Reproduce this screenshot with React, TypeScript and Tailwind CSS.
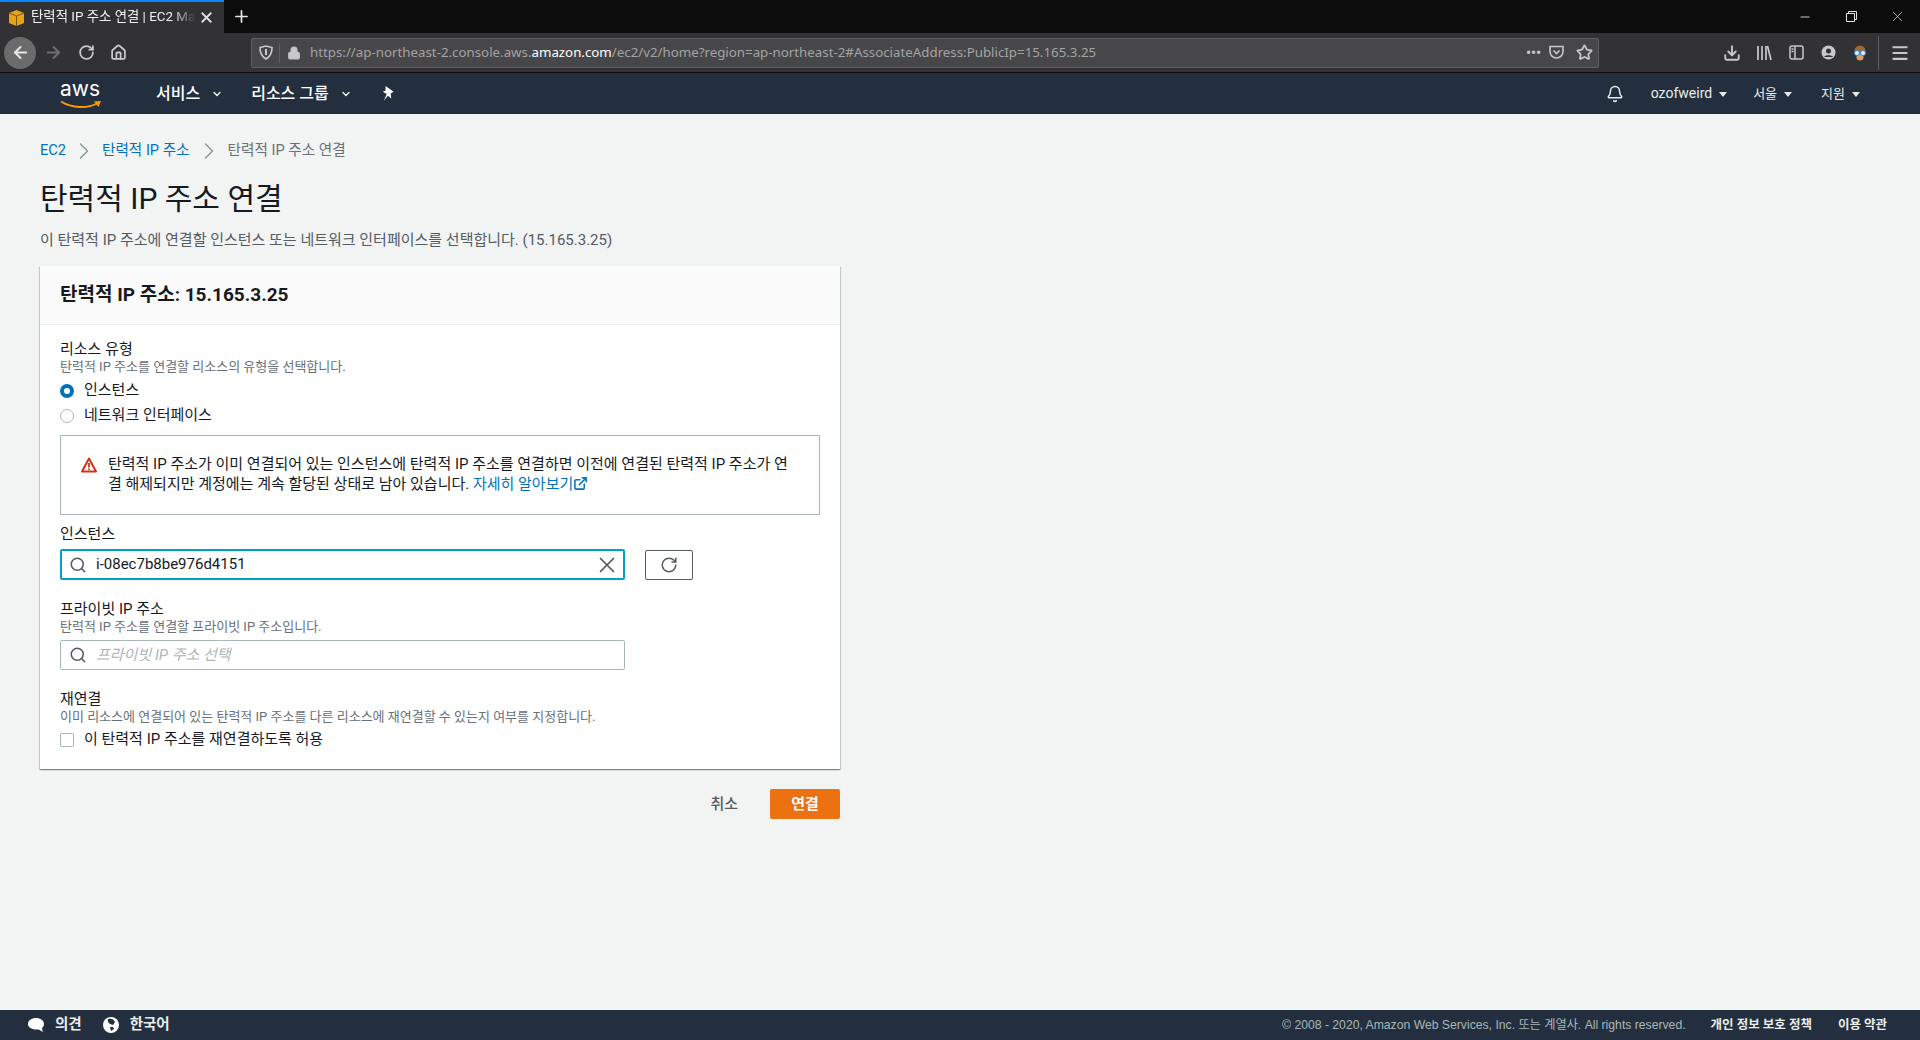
import React from 'react';
import { ArrowLeft, ArrowRight, RotateCw, Home, Lock, Star, Download, Menu, Bell, Search, X, Plus, ChevronDown, ChevronRight, ExternalLink, Minus } from 'lucide-react';

const font = { fontFamily: 'Roboto, "Noto Sans CJK KR", sans-serif' };

function Caret() {
  return (
    <svg width="8" height="5" viewBox="0 0 8 5" className="ml-[7px] mt-px">
      <path d="M0 0h8L4 5z" fill="#e8e8e8" />
    </svg>
  );
}

function TabStrip() {
  return (
    <div className="flex h-[33px] bg-[#0c0c0d] text-white">
      <div className="flex h-[33px] w-[224px] items-center border-t-2 border-[#0a84ff] bg-[#323234] pl-[9px] pr-[9px]">
        <svg width="15" height="16" viewBox="0 0 15 16" className="shrink-0">
          <path d="M7.5 0 15 3v10l-7.5 3L0 13V3z" fill="#e8a317" />
          <path d="M0 3l7.5 3L15 3M7.500 6v10" stroke="#7a5208" strokeWidth="1" fill="none" />
        </svg>
        <span className="ml-[7px] w-[165px] overflow-hidden whitespace-nowrap text-[13.4px] text-[#f0f0f0] [mask-image:linear-gradient(to_right,black_85%,transparent)]">탄력적 IP 주소 연결 | EC2 Man</span>
        <X size={17} strokeWidth={2.500} className="ml-auto text-[#e0e0e0]" />
      </div>
      <div className="flex w-[34px] items-center justify-center">
        <Plus size={19} strokeWidth={2.200} className="text-[#e6e6e6]" />
      </div>
      <div className="ml-auto flex items-center text-[#e6e6e6]">
        <div className="flex w-[46px] justify-center"><Minus size={14} strokeWidth={1.500} /></div>
        <div className="flex w-[46px] justify-center">
          <svg width="11" height="11" viewBox="0 0 11 11" fill="none" stroke="currentColor">
            <path d="M.5 2.5h8v8h-8zM2.5 2.5v-2h8v8h-2" />
          </svg>
        </div>
        <div className="flex w-[46px] justify-center"><X size={17} strokeWidth={1} /></div>
      </div>
    </div>
  );
}

function Toolbar() {
  return (
    <div className="flex h-[40px] items-center border-b border-[#0c0c0d] bg-[#323234] text-[#c8c8c9]">
      <div className="ml-[4px] flex h-[32px] w-[32px] items-center justify-center rounded-full bg-[#6b6b6c]">
        <ArrowLeft size={19} strokeWidth={2.500} className="text-[#e8e8e8]" />
      </div>
      <ArrowRight size={19} strokeWidth={2.500} className="ml-[8px] text-[#6f6f70]" />
      <RotateCw size={17} strokeWidth={2.500} className="ml-[15px]" />
      <Home size={17} strokeWidth={2.500} className="ml-[15px]" />
      <div className="ml-[124px] flex h-[30px] w-[1348px] items-center rounded-[2px] border border-[#5f5f60] bg-[#474749]">
        <svg width="14" height="15" viewBox="0 0 14 15" fill="none" stroke="#c8c8c9" strokeWidth="1.6" className="ml-[7px]">
          <path d="M1 2.5 7 1l6 1.5c0 5-1.5 9-6 11.5C2.500 11.500 1 7.500 1 2.500z" />
          <path d="M7 4v6" strokeWidth="2" />
        </svg>
        <div className="ml-[6px] h-[20px] w-px bg-[#5f5f60]" />
        <Lock size={14} fill="#c8c8c9" className="ml-[7px]" />
        <span className="ml-[9px] whitespace-nowrap text-[13.3px] text-[#a3a3a4]" style={{ fontFamily: '"Noto Sans", sans-serif' }}>
          https://ap-northeast-2.console.aws.<span className="text-white">amazon.com</span>/ec2/v2/home?region=ap-northeast-2#AssociateAddress:PublicIp=15.165.3.25
        </span>
        <span className="ml-auto text-[14px] font-bold leading-none text-[#c8c8c9]">•••</span>
        <svg width="15" height="15" viewBox="0 0 15 15" fill="none" stroke="#c8c8c9" strokeWidth="1.6" className="ml-[8px]">
          <path d="M1 1.500h13v5a6.500 6.500 0 0 1-13 0z" />
          <path d="M4.500 5.500 7.500 8.500l3-3" />
        </svg>
        <Star size={17} strokeWidth={2.500} className="ml-[12px] mr-[5px]" />
      </div>
      <Download size={18} strokeWidth={2.500} className="ml-[124px]" />
      <svg width="16" height="15" viewBox="0 0 16 15" fill="none" stroke="#c8c8c9" className="ml-[15px]">
        <path d="M2 1v14M6 1v14M10 1v14M11.500 1l3.500 14" strokeWidth="1.700" />
      </svg>
      <svg width="15" height="15" viewBox="0 0 15 15" fill="none" stroke="#c8c8c9" strokeWidth="1.500" className="ml-[17px]">
        <rect x="1" y="1" width="13" height="13" rx="2" />
        <path d="M6 1v13M2.500 4h2M2.500 6.500h2" />
      </svg>
      <svg width="15" height="15" viewBox="0 0 15 15" className="ml-[17px]">
        <circle cx="7.500" cy="7.500" r="7" fill="#c8c8c9" />
        <circle cx="7.500" cy="6" r="2.500" fill="#323234" />
        <path d="M3 12c1-2.500 8-2.500 9 0z" fill="#323234" />
      </svg>
      <svg width="14" height="16" viewBox="0 0 14 16" className="ml-[17px]">
        <circle cx="7" cy="6" r="5.500" fill="#a5652a" />
        <circle cx="7" cy="12" r="3.500" fill="#d99a73" />
        <circle cx="4" cy="8" r="2.500" fill="#dff1ff" stroke="#2f86e6" />
        <circle cx="10" cy="8" r="2.500" fill="#dff1ff" stroke="#2f86e6" />
      </svg>
      <div className="ml-[11px] h-[34px] w-px bg-[#5f5f60]" />
      <Menu size={20} strokeWidth={2.500} className="ml-[11px]" />
    </div>
  );
}

function AwsNav() {
  return (
    <div className="flex h-[41px] items-center bg-[#232f3e] text-[#eaeded]">
      <div className="relative ml-[60px] h-[34px] w-[42px]">
        <span className="absolute left-0 top-[-1px] text-[21px] leading-[26px] text-white" style={{ fontFamily: 'Inter, sans-serif' }}>aws</span>
        <svg width="42" height="10" viewBox="0 0 42 10" className="absolute left-0 top-[23px]">
          <path d="M1 1.500c11 7 27 7 36 2" stroke="#f90" strokeWidth="2" fill="none" />
          <path d="M34 1.500l7-.5-2.500 6z" fill="#f90" />
        </svg>
      </div>
      <span className="ml-[54px] text-[16px] font-medium text-white">서비스</span>
      <ChevronDown size={12} strokeWidth={3} className="ml-[11px] mt-px" />
      <span className="ml-[28px] text-[16px] font-medium text-white">리소스 그룹</span>
      <ChevronDown size={12} strokeWidth={3} className="ml-[11px] mt-px" />
      <svg width="16" height="16" viewBox="0 0 14 14" className="ml-[29px]">
        <path d="M4 0l7 5-2.500 1.500L9 11 6 8.500 2.500 13 5 7 1.500 5 4 4z" fill="#fff" />
      </svg>
      <Bell size={18} className="ml-auto -translate-x-px" />
      <span className="ml-[26px] text-[14px]">ozofweird</span>
      <Caret />
      <span className="ml-[26px] text-[13px]">서울</span>
      <Caret />
      <span className="ml-[29px] text-[13px]">지원</span>
      <Caret />
      <div className="w-[60px]" />
    </div>
  );
}

function Radio({ checked, label }: { checked?: boolean; label: string }) {
  return (
    <div className="flex h-[25px] items-center">
      {checked ? (
        <span className="h-[14px] w-[14px] rounded-full border-[4px] border-[#0073bb] bg-white" />
      ) : (
        <span className="h-[14px] w-[14px] rounded-full border border-[#aab7b8] bg-white" />
      )}
      <span className="ml-[10px] text-[15px] text-[#16191f]">{label}</span>
    </div>
  );
}

function Field({ title, sub }: { title: string; sub?: string }) {
  return (
    <>
      <div className="h-[18px] text-[15px] leading-[18px] text-[#16191f]">{title}</div>
      {sub && <div className="mt-px h-[16px] text-[13px] leading-[16px] text-[#687078]">{sub}</div>}
    </>
  );
}

export default function App() {
  return (
    <div className="flex h-[1040px] flex-col overflow-hidden bg-[#f2f3f3]" style={font}>
      <TabStrip />
      <Toolbar />
      <AwsNav />

      <main className="flex-1 px-[40px]">
        <nav className="mt-[27px] flex h-[20px] items-center text-[14.6px]">
          <span className="text-[#0073bb]">EC2</span>
          <ChevronRight size={28} strokeWidth={1.200} className="mx-[4px] text-[#879596]" />
          <span className="text-[#0073bb]">탄력적 IP 주소</span>
          <ChevronRight size={28} strokeWidth={1.200} className="mx-[5px] text-[#879596]" />
          <span className="text-[#687078]">탄력적 IP 주소 연결</span>
        </nav>
        <h1 className="mt-[20px] text-[30px] leading-[36px] text-[#16191f]">탄력적 IP 주소 연결</h1>
        <p className="mt-[13px] text-[15px] leading-[20px] text-[#545b64]">이 탄력적 IP 주소에 연결할 인스턴스 또는 네트워크 인터페이스를 선택합니다. (15.165.3.25)</p>

        <section className="mt-[16px] w-[800px] bg-white shadow-[0_1px_1px_0_rgba(0,28,36,0.3),1px_1px_1px_0_rgba(0,28,36,0.15),-1px_1px_1px_0_rgba(0,28,36,0.15)]">
          <header className="flex h-[59px] items-center border-b border-[#eaeded] bg-[#fafafa] px-[20px]">
            <h2 className="text-[19px] font-bold text-[#16191f]">탄력적 IP 주소: 15.165.3.25</h2>
          </header>
          <div className="px-[20px] pb-[17px] pt-[15px]">
            <Field title="리소스 유형" sub="탄력적 IP 주소를 연결할 리소스의 유형을 선택합니다." />
            <div className="mt-[3px]">
              <Radio checked label="인스턴스" />
              <Radio label="네트워크 인터페이스" />
            </div>

            <div className="mt-[7px] flex h-[80px] w-[760px] border border-[#aab7b8] bg-white pl-[20px] pr-[22px] pt-[18px]">
              <svg width="16" height="16" viewBox="0 0 16 16" className="mt-[3px] shrink-0" fill="none">
                <path d="M8 1.500 15 14.500H1z" stroke="#d13212" strokeWidth="2" strokeLinejoin="round" />
                <path d="M8 6v4.500M8 11.500v1.500" stroke="#d13212" strokeWidth="1.800" />
              </svg>
              <p className="ml-[11px] break-all text-[15px] leading-[20px] text-[#16191f]">
                탄력적 IP 주소가 이미 연결되어 있는 인스턴스에 탄력적 IP 주소를 연결하면 이전에 연결된 탄력적 IP 주소가 연결 해제되지만 계정에는 계속 할당된 상태로 남아 있습니다.{' '}
                <span className="text-[#0073bb]">자세히 알아보기</span>
                <ExternalLink size={15} strokeWidth={2.500} className="inline-block align-[-2px] text-[#0073bb]" />
              </p>
            </div>

            <div className="mt-[10px]"><Field title="인스턴스" /></div>
            <div className="mt-[6px] flex items-center">
              <div className="flex h-[31px] w-[565px] items-center rounded-[2px] border-2 border-[#00a1c9] bg-white pl-[7px] pr-[3px]">
                <Search size={18} strokeWidth={2} className="text-[#545b64]" />
                <span className="ml-[9px] text-[15px] text-[#16191f]">i-08ec7b8be976d4151</span>
                <X size={26} strokeWidth={1.600} className="ml-auto text-[#545b64]" />
              </div>
              <button className="ml-[20px] flex h-[30px] w-[48px] items-center justify-center rounded-[2px] border border-[#545b64] bg-white">
                <RotateCw size={18} strokeWidth={2} className="text-[#545b64]" />
              </button>
            </div>

            <div className="mt-[20px]"><Field title="프라이빗 IP 주소" sub="탄력적 IP 주소를 연결할 프라이빗 IP 주소입니다." /></div>
            <div className="mt-[5px] flex h-[30px] w-[565px] items-center rounded-[2px] border border-[#aab7b8] bg-white pl-[8px]">
              <Search size={18} strokeWidth={2} className="text-[#545b64]" />
              <span className="ml-[9px] text-[15px] italic text-[#aab7b8]">프라이빗 IP 주소 선택</span>
            </div>

            <div className="mt-[20px]"><Field title="재연결" sub="이미 리소스에 연결되어 있는 탄력적 IP 주소를 다른 리소스에 재연결할 수 있는지 여부를 지정합니다." /></div>
            <div className="mt-[2px] flex h-[25px] items-center">
              <span className="h-[14px] w-[14px] rounded-[2px] border border-[#aab7b8] bg-white" />
              <span className="ml-[10px] text-[15px] text-[#16191f]">이 탄력적 IP 주소를 재연결하도록 허용</span>
            </div>
          </div>
        </section>

        <div className="mt-[20px] flex w-[800px] items-center justify-end">
          <span className="text-[15px] font-medium text-[#545b64]">취소</span>
          <button className="ml-[32px] h-[30px] w-[70px] rounded-[2px] bg-[#ec7211] text-[15px] font-bold text-white">연결</button>
        </div>
      </main>

      <footer className="flex h-[30px] items-center bg-[#232f3e] text-[#eaeded]">
        <svg width="18" height="16" viewBox="0 0 18 16" className="ml-[27px]">
          <path d="M9 1c4.500 0 8 2.500 8 6 0 1.800-.8 3-2 4l.8 4-4-2.500C7 13 1 11.500 1 7c0-3.500 3.500-6 8-6z" fill="#fff" />
        </svg>
        <span className="ml-[10px] text-[14.5px] font-bold">의견</span>
        <svg width="16" height="16" viewBox="0 0 16 16" className="ml-[21px]">
          <circle cx="8" cy="8" r="8" fill="#fff" />
          <path d="M5 2c3-1 6 0 7 3l-2 3-3-1-2-2zM7 10l3 0 1 2-3 2z" fill="#232f3e" />
        </svg>
        <span className="ml-[11px] text-[14.5px] font-bold">한국어</span>
        <span className="ml-auto whitespace-nowrap text-[12.2px] text-[#aab7b8]" style={{ fontFamily: '"Liberation Sans", "Noto Sans CJK KR", sans-serif' }}>© 2008 - 2020, Amazon Web Services, Inc. 또는 계열사. All rights reserved.</span>
        <span className="ml-[25px] text-[12.5px] font-bold">개인 정보 보호 정책</span>
        <span className="ml-[26px] mr-[33px] text-[12.5px] font-bold">이용 약관</span>
      </footer>
    </div>
  );
}
